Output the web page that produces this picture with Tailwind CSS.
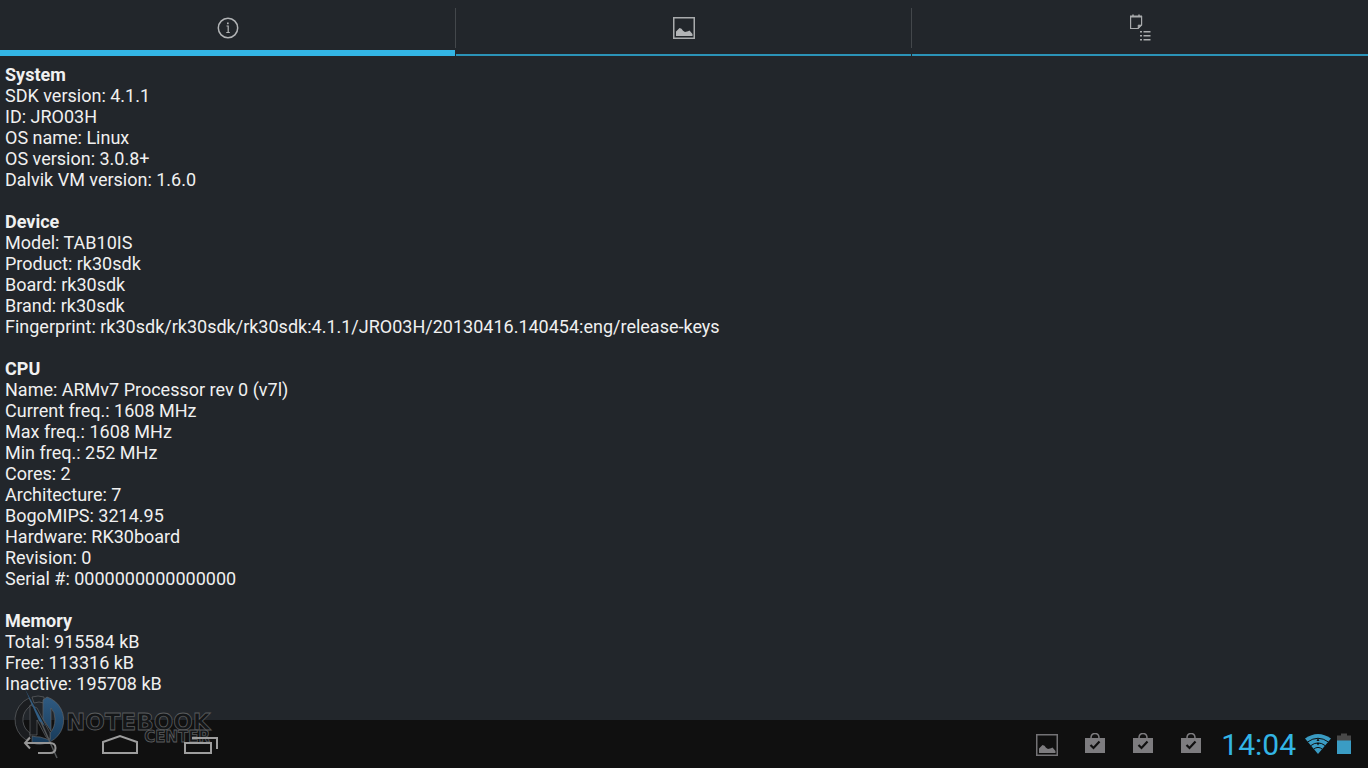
<!DOCTYPE html>
<html lang="en">
<head>
    <meta charset="UTF-8">
    <meta name="viewport" content="width=device-width, initial-scale=1.0">
    <title>System Info</title>
    <script src="https://cdn.jsdelivr.net/npm/@tailwindcss/browser@4"></script>
</head>
<body class="relative flex min-h-screen flex-col bg-[#22262b] font-['Roboto','Noto_Sans',sans-serif] text-[#f0f0f0]">

    <!-- Tabs -->
    <nav class="grid h-14 grid-cols-3" role="tablist">
        <div class="flex">
            <button role="tab" aria-selected="true" aria-label="Info" class="flex flex-1 items-start justify-center border-b-6 border-[#33b5e5] pt-4">
                <svg class="size-6" viewBox="0 0 24 24" fill="none" stroke="#b2b4b6">
                    <circle cx="12" cy="12" r="9.7" stroke-width="1.5"/>
                    <path d="M10.500 10h1.700v6.500M10.300 16.500h3.500" stroke-width="1.2"/>
                    <rect x="11" y="6.5" width="1.700" height="1.700" fill="#b2b4b6" stroke="none"/>
                </svg>
            </button>
            <span class="my-2 w-px bg-[#43474b]"></span>
        </div>
        <div class="flex">
            <button role="tab" aria-selected="false" aria-label="Pictures" class="flex flex-1 items-start justify-center border-b-2 border-[#2b93b8] pt-4">
                <svg class="size-6" viewBox="0 0 24 24">
                    <rect x="1.75" y="1.75" width="20.5" height="20.5" fill="none" stroke="#a9abad" stroke-width="1.5"/>
                    <path d="M4 20v-4.500l3.500-3.500 2 .8 1.500 2 2 1.200 3-.8 1.500-.7 3 3.500v2z" fill="#b2b4b6"/>
                </svg>
            </button>
            <span class="my-2 w-px bg-[#43474b]"></span>
        </div>
        <div class="flex">
            <button role="tab" aria-selected="false" aria-label="Notes" class="flex flex-1 items-start justify-center border-b-2 border-[#2b93b8] pt-3">
                <svg class="size-8" viewBox="0 0 32 32" fill="none" stroke="#a9abad">
                    <path d="M6.600 4.500h11v8.500l-3.500 3.500H6.600z" stroke-width="1.200"/>
                    <path d="M6 4.500h12" stroke-width="2"/>
                    <path d="M9 2.500v2M15 2.500v2" stroke-width="1.500"/>
                    <path d="M17.600 13h-3.500v3.500z" fill="#a9abad" stroke-width=".6"/>
                    <path d="M16 19.700h2M16 23.700h2M16 27.700h2M19.500 19.700h7M19.500 23.700h7M19.500 27.700h7" stroke-width="1.600"/>
                </svg>
            </button>
        </div>
    </nav>

    <!-- Device report -->
    <main class="flex flex-1 flex-col gap-[21px] px-[5px] pt-2 text-[18px] leading-[21px]">
        <section>
            <h2 class="font-bold">System</h2>
            <p>SDK version: 4.1.1</p>
            <p>ID: JRO03H</p>
            <p>OS name: Linux</p>
            <p>OS version: 3.0.8+</p>
            <p>Dalvik VM version: 1.6.0</p>
        </section>
        <section>
            <h2 class="font-bold">Device</h2>
            <p>Model: TAB10IS</p>
            <p>Product: rk30sdk</p>
            <p>Board: rk30sdk</p>
            <p>Brand: rk30sdk</p>
            <p>Fingerprint: rk30sdk/rk30sdk/rk30sdk:4.1.1/JRO03H/20130416.140454:eng/release-keys</p>
        </section>
        <section>
            <h2 class="font-bold">CPU</h2>
            <p>Name: ARMv7 Processor rev 0 (v7l)</p>
            <p>Current freq.: 1608 MHz</p>
            <p>Max freq.: 1608 MHz</p>
            <p>Min freq.: 252 MHz</p>
            <p>Cores: 2</p>
            <p>Architecture: 7</p>
            <p>BogoMIPS: 3214.95</p>
            <p>Hardware: RK30board</p>
            <p>Revision: 0</p>
            <p>Serial #: 0000000000000000</p>
        </section>
        <section>
            <h2 class="font-bold">Memory</h2>
            <p>Total: 915584 kB</p>
            <p>Free: 113316 kB</p>
            <p>Inactive: 195708 kB</p>
        </section>
    </main>

    <!-- System bar -->
    <footer class="flex h-12 items-center justify-between bg-[#101010] pr-4">
        <div class="relative z-10 flex">
            <button aria-label="Back" class="flex w-20 justify-center">
                <svg class="h-6 w-10" viewBox="0 0 40 24" fill="none" stroke="#969696" stroke-width="2">
                    <path d="M10 5.500L5 11l5 5.500M5 11h25q5.500 0 5.500 5t-5.500 5H18"/>
                </svg>
            </button>
            <button aria-label="Home" class="flex w-20 justify-center">
                <svg class="h-6 w-10" viewBox="0 0 40 24" fill="none" stroke="#9e9e9e" stroke-width="2">
                    <path d="M3 21V10L20 4l17 6v11z"/>
                </svg>
            </button>
            <button aria-label="Recent apps" class="flex w-20 justify-center">
                <svg class="h-6 w-10" viewBox="0 0 40 24" fill="none" stroke="#9e9e9e" stroke-width="2">
                    <path d="M5 11h26v10H5zM12 6h25v11"/>
                </svg>
            </button>
        </div>
        <div class="flex items-center gap-6 pt-0.5">
            <svg class="size-6" viewBox="0 0 24 24">
                <rect x="1.750" y="1.750" width="20.500" height="20.500" fill="none" stroke="#737275" stroke-width="1.500"/>
                <path d="M4 20v-4.500l3.500-3.500 2 .8 1.500 2 2 1.200 3-.8 1.500-.7 3 3.500v2z" fill="#7d7c7f"/>
            </svg>
            <svg class="size-6" viewBox="0 0 24 24" fill="none">
                <path d="M8 5q0-4.500 4-4.500T16 5" stroke="#7d7c7f" stroke-width="1.500"/>
                <path d="M2 5h20v15H2z" fill="#7d7c7f"/>
                <path d="M7.500 12l3 3 6-6.500" stroke="#101010" stroke-width="2.200"/>
            </svg>
            <svg class="size-6" viewBox="0 0 24 24" fill="none">
                <path d="M8 5q0-4.500 4-4.500T16 5" stroke="#7d7c7f" stroke-width="1.500"/>
                <path d="M2 5h20v15H2z" fill="#7d7c7f"/>
                <path d="M7.500 12l3 3 6-6.500" stroke="#101010" stroke-width="2.200"/>
            </svg>
            <svg class="size-6" viewBox="0 0 24 24" fill="none">
                <path d="M8 5q0-4.500 4-4.500T16 5" stroke="#7d7c7f" stroke-width="1.500"/>
                <path d="M2 5h20v15H2z" fill="#7d7c7f"/>
                <path d="M7.500 12l3 3 6-6.500" stroke="#101010" stroke-width="2.200"/>
            </svg>
            <div class="-ml-1.5 flex items-center gap-2">
                <time class="text-[30px] leading-8 text-[#33b5e5]">14:04</time>
                <div class="flex items-center gap-1">
                    <svg class="h-6 w-7" viewBox="0 0 28 24">
                        <path d="M1 5.500Q14-3.500 27 5.500L14 21z" fill="#3a9cc4"/>
                        <path d="M3.500 9Q14 1.500 24.500 9M6.500 12.800Q14 7 21.500 12.800M9.500 16.300Q14 12.500 18.500 16.300" fill="none" stroke="#101010" stroke-width="1"/>
                        <path d="M14 5l-1.500 3h3zM12.500 10h3l-1.500 2.500z" fill="#101010"/>
                    </svg>
                    <svg class="h-6 w-4" viewBox="0 0 16 24">
                        <path d="M5 .5h6v2h4V8H1V2.500h4z" fill="#484848"/>
                        <path d="M1 7.500h14V21H1z" fill="#3a9cc4"/>
                    </svg>
                </div>
            </div>
        </div>
    </footer>

    <!-- Watermark laid over the bottom left corner -->
    <div class="pointer-events-none absolute bottom-2 left-3">
        <svg class="h-[72px] w-[204px]" viewBox="0 0 204 72">
            <defs>
                <linearGradient id="blue" x1="0" y1="0" x2="0" y2="1">
                    <stop offset="0" stop-color="#2f5b82"/>
                    <stop offset="1" stop-color="#173a59"/>
                </linearGradient>
            </defs>
            <g stroke="#606365" stroke-width=".7">
                <path d="M17 10A24 24 0 0 0 14 52L18 49V45A16 16 0 0 1 15 21L20 16z" fill="#1b1d20"/>
                <path d="M20 9Q26 7 32 9V15Q27 13 22 15z" fill="#202428"/>
                <path d="M35 9A24 24 0 0 1 20 55L20 48Q24 49 28 49L38 52V45Q43 40 43 31Q43 24 39 20V43L31 31V12z" fill="url(#blue)"/>
                <path d="M18 47V17L25 20 38 45V51L34 49 25 32V47z" fill="#191b1e"/>
            </g>
            <path d="M13 1L33 38 27 33z" fill="#315e85"/>
            <path d="M29 34L45 70" fill="none" stroke="#55585a" stroke-width="1.500"/>
            <g stroke="#5a5c5e" stroke-width=".8" fill="#141618" font-family="DejaVu Sans, sans-serif" font-weight="700">
                <text x="54" y="42" font-size="23">NOTEBOOK</text>
                <text x="198" y="54" font-size="15" text-anchor="end">CENTER</text>
            </g>
        </svg>
    </div>
</body>
</html>
